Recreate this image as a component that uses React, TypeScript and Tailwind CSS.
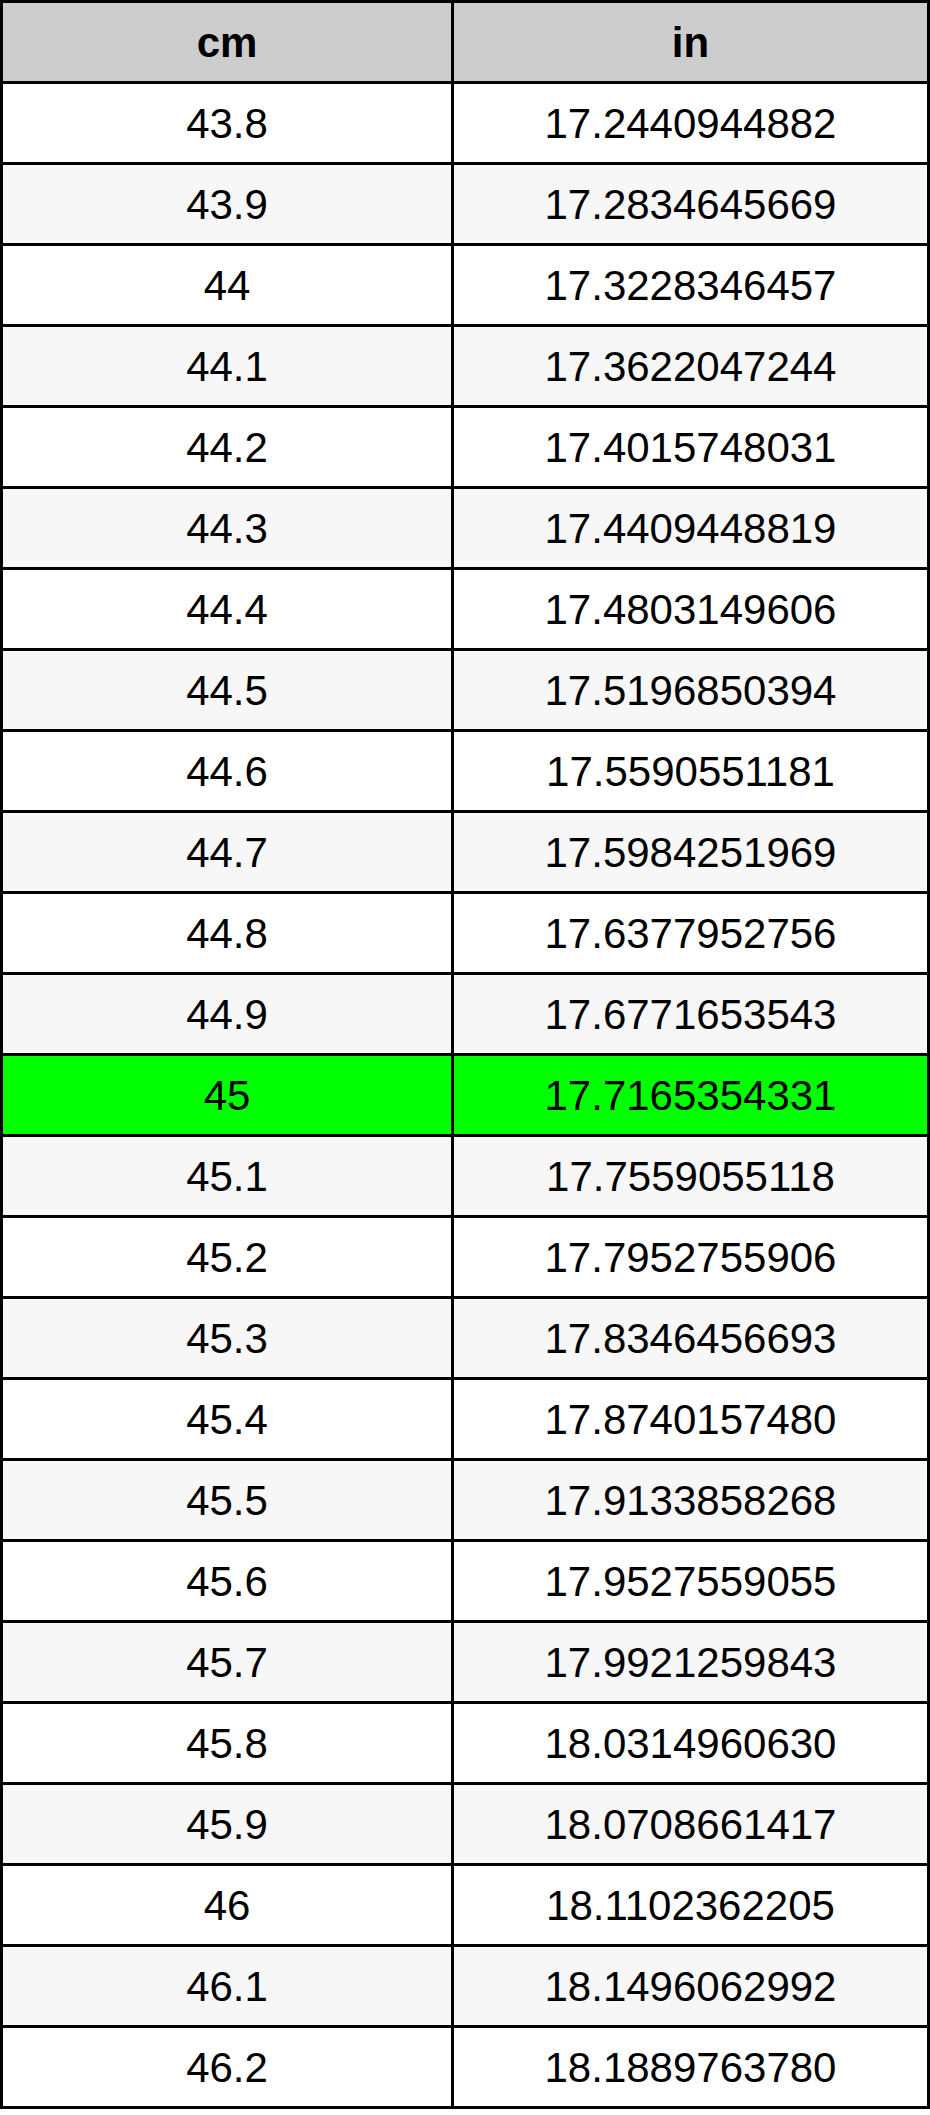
const rows: [string, string][] = [
  ['43.8', '17.2440944882'],
  ['43.9', '17.2834645669'],
  ['44', '17.3228346457'],
  ['44.1', '17.3622047244'],
  ['44.2', '17.4015748031'],
  ['44.3', '17.4409448819'],
  ['44.4', '17.4803149606'],
  ['44.5', '17.5196850394'],
  ['44.6', '17.5590551181'],
  ['44.7', '17.5984251969'],
  ['44.8', '17.6377952756'],
  ['44.9', '17.6771653543'],
  ['45', '17.7165354331'],
  ['45.1', '17.7559055118'],
  ['45.2', '17.7952755906'],
  ['45.3', '17.8346456693'],
  ['45.4', '17.8740157480'],
  ['45.5', '17.9133858268'],
  ['45.6', '17.9527559055'],
  ['45.7', '17.9921259843'],
  ['45.8', '18.0314960630'],
  ['45.9', '18.0708661417'],
  ['46', '18.1102362205'],
  ['46.1', '18.1496062992'],
  ['46.2', '18.1889763780'],
];

const rowBg = (i: number) => {
  if (rows[i][0] === '45') return 'bg-[#00ff00]';
  return i % 2 === 1 ? 'bg-[#f7f7f7]' : 'bg-white';
};

export default function App() {
  return (
    <div className="w-[930px] h-[2115px] bg-white" style={{ fontFamily: '"Liberation Sans", Arial, sans-serif' }}>
      <div className="grid grid-cols-[448px_473px] auto-rows-[78px] gap-[3px] p-[3px] bg-black text-black text-[42px]">
        {/* Header */}
        <div className="bg-[#cdcdcd] flex items-center justify-center font-bold">cm</div>
        <div className="bg-[#cdcdcd] flex items-center justify-center font-bold">in</div>

        {rows.map(([cm, inch], i) => (
          <div key={cm} className="contents">
            <div className={`${rowBg(i)} flex items-center justify-center`}>{cm}</div>
            <div className={`${rowBg(i)} flex items-center justify-center`}>{inch}</div>
          </div>
        ))}
      </div>
    </div>
  );
}
